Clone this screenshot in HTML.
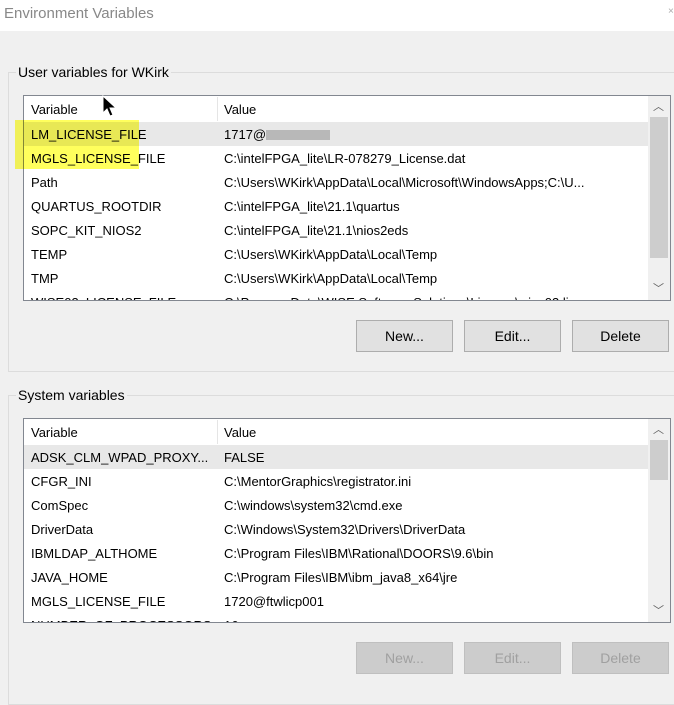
<!DOCTYPE html>
<html><head><style>
*{margin:0;padding:0;box-sizing:border-box}
body{width:674px;height:691px;background:#f0f0f0;font-family:"Liberation Sans",sans-serif;font-size:13px;color:#000;position:relative;overflow:hidden}
.a{position:absolute}
.title{left:0;top:0;width:674px;height:31px;background:#fff}
.title span{position:absolute;left:4px;top:5px;font-size:15px;color:#888}
.grp{border:1px solid #dcdcdc;border-right:none}
.lbl{background:#f0f0f0;padding:0 2px;font-size:14px}
.list{background:#fff;border:1px solid #828790;overflow:hidden}
.row{position:absolute;left:0;width:624px;height:24px;line-height:26px}
.row .v{position:absolute;left:7px}
.row .w{position:absolute;left:200px;white-space:nowrap}
.hdr .sep{position:absolute;left:193px;top:0;width:1px;height:24px;background:#e5e5e5}
.sb{position:absolute;right:0;top:0;width:22px;height:100%;background:#f0f0f0}
.thumb{position:absolute;left:2px;width:18px;background:#cdcdcd}
.btn{position:absolute;height:32px;border:1px solid #adadad;background:#e1e1e1;text-align:center;line-height:31px;font-size:14px}
.dis{border-color:#bfbfbf;background:#cccccc;color:#a0a0a0}
.arr{position:absolute;left:5px;font-size:11px;color:#606060}
</style></head><body>
<div class="a title"><span>Environment Variables</span></div>
<div class="a" style="left:668px;top:6px;color:#aaa;font-size:10px">×</div>

<div class="a grp" style="left:8px;top:72px;width:670px;height:300px"></div>
<div class="a lbl" style="left:16px;top:64px">User variables for WKirk</div>
<div class="a list" style="left:23px;top:95px;width:648px;height:206px">
 <div class="row hdr" style="top:1px"><span class="v">Variable</span><span class="sep"></span><span class="w">Value</span></div>
 <div class="row" style="top:26px;background:#e8e8e8"><span class="v">LM_LICENSE_FILE</span><span class="w">1717@<span style="display:inline-block;width:64px;height:10px;background:#b8b8b8;vertical-align:-1px"></span></span></div>
 <div class="row" style="top:50px"><span class="v">MGLS_LICENSE_FILE</span><span class="w">C:\intelFPGA_lite\LR-078279_License.dat</span></div>
 <div class="row" style="top:74px"><span class="v">Path</span><span class="w">C:\Users\WKirk\AppData\Local\Microsoft\WindowsApps;C:\U...</span></div>
 <div class="row" style="top:98px"><span class="v">QUARTUS_ROOTDIR</span><span class="w">C:\intelFPGA_lite\21.1\quartus</span></div>
 <div class="row" style="top:122px"><span class="v">SOPC_KIT_NIOS2</span><span class="w">C:\intelFPGA_lite\21.1\nios2eds</span></div>
 <div class="row" style="top:146px"><span class="v">TEMP</span><span class="w">C:\Users\WKirk\AppData\Local\Temp</span></div>
 <div class="row" style="top:170px"><span class="v">TMP</span><span class="w">C:\Users\WKirk\AppData\Local\Temp</span></div>
 <div class="row" style="top:194px"><span class="v">WISE03_LICENSE_FILE</span><span class="w">C:\ProgramData\WISE Software Solutions\License\wise03.lic</span></div>
 <div class="sb"><span class="arr" style="top:2px">︿</span><div class="thumb" style="top:21px;height:141px"></div><span class="arr" style="top:184px">﹀</span></div>
</div>
<div class="a" style="left:15px;top:120px;width:124px;height:49px;background:#ffff40;mix-blend-mode:multiply;opacity:.85"></div>
<svg class="a" style="left:102px;top:95px" width="18" height="24" viewBox="0 0 18 24"><path d="M1 1 L1 18 L5 14 L8 21 L11 20 L8 13 L14 13 Z" fill="#000" stroke="#fff" stroke-width="1"/></svg>
<div class="btn" style="left:356px;top:320px;width:97px">New...</div>
<div class="btn" style="left:464px;top:320px;width:97px">Edit...</div>
<div class="btn" style="left:572px;top:320px;width:97px">Delete</div>

<div class="a grp" style="left:8px;top:395px;width:670px;height:310px"></div>
<div class="a lbl" style="left:16px;top:387px">System variables</div>
<div class="a list" style="left:23px;top:418px;width:648px;height:205px">
 <div class="row hdr" style="top:1px"><span class="v">Variable</span><span class="sep"></span><span class="w">Value</span></div>
 <div class="row" style="top:26px;background:#e8e8e8"><span class="v">ADSK_CLM_WPAD_PROXY...</span><span class="w">FALSE</span></div>
 <div class="row" style="top:50px"><span class="v">CFGR_INI</span><span class="w">C:\MentorGraphics\registrator.ini</span></div>
 <div class="row" style="top:74px"><span class="v">ComSpec</span><span class="w">C:\windows\system32\cmd.exe</span></div>
 <div class="row" style="top:98px"><span class="v">DriverData</span><span class="w">C:\Windows\System32\Drivers\DriverData</span></div>
 <div class="row" style="top:122px"><span class="v">IBMLDAP_ALTHOME</span><span class="w">C:\Program Files\IBM\Rational\DOORS\9.6\bin</span></div>
 <div class="row" style="top:146px"><span class="v">JAVA_HOME</span><span class="w">C:\Program Files\IBM\ibm_java8_x64\jre</span></div>
 <div class="row" style="top:170px"><span class="v">MGLS_LICENSE_FILE</span><span class="w">1720@ftwlicp001</span></div>
 <div class="row" style="top:194px"><span class="v">NUMBER_OF_PROCESSORS</span><span class="w">16</span></div>
 <div class="sb"><span class="arr" style="top:2px">︿</span><div class="thumb" style="top:21px;height:40px"></div><span class="arr" style="top:183px">﹀</span></div>
</div>
<div class="btn dis" style="left:356px;top:642px;width:97px">New...</div>
<div class="btn dis" style="left:464px;top:642px;width:97px">Edit...</div>
<div class="btn dis" style="left:572px;top:642px;width:97px">Delete</div>
</body></html>
